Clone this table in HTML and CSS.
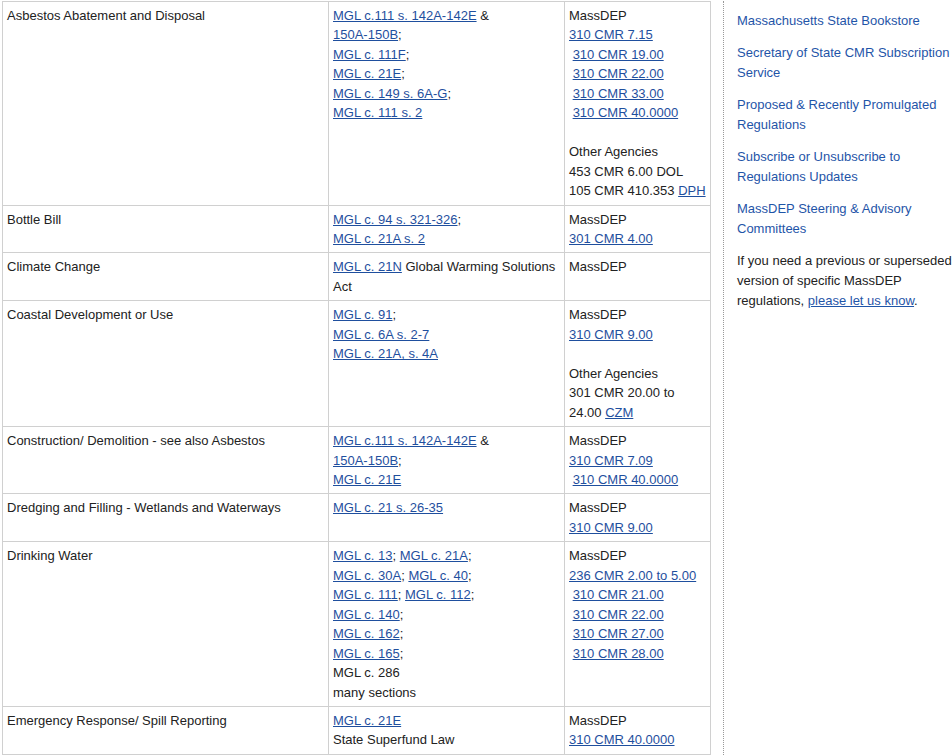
FILE: index.html
```html
<!DOCTYPE html>
<html lang="en">
<head>
<meta charset="utf-8">
<title>MassDEP Regulations by Topic</title>
<link rel="stylesheet" href="styles.css">
</head>
<body>
<div class="page">
  <div class="main">
    <table class="regs">
      <colgroup>
        <col class="c1"><col class="c2"><col class="c3">
      </colgroup>
      <tbody>
        <tr>
          <td>Asbestos Abatement and Disposal</td>
          <td><a href="#">MGL c.111 s. 142A-142E</a> &amp;<br><a href="#">150A-150B</a>;<br><a href="#">MGL c. 111F</a>;<br><a href="#">MGL c. 21E</a>;<br><a href="#">MGL c. 149 s. 6A-G</a>;<br><a href="#">MGL c. 111 s. 2</a></td>
          <td>MassDEP<br><a href="#">310 CMR 7.15</a><br>&nbsp;<a href="#">310 CMR 19.00</a><br>&nbsp;<a href="#">310 CMR 22.00</a><br>&nbsp;<a href="#">310 CMR 33.00</a><br>&nbsp;<a href="#">310 CMR 40.0000</a><br><br>Other Agencies<br>453 CMR 6.00 DOL<br>105 CMR 410.353 <a href="#">DPH</a></td>
        </tr>
        <tr>
          <td>Bottle Bill</td>
          <td><a href="#">MGL c. 94 s. 321-326</a>;<br><a href="#">MGL c. 21A s. 2</a></td>
          <td>MassDEP<br><a href="#">301 CMR 4.00</a></td>
        </tr>
        <tr>
          <td>Climate Change</td>
          <td><a href="#">MGL c. 21N</a> Global Warming Solutions<br>Act</td>
          <td>MassDEP</td>
        </tr>
        <tr>
          <td>Coastal Development or Use</td>
          <td><a href="#">MGL c. 91</a>;<br><a href="#">MGL c. 6A s. 2-7</a><br><a href="#">MGL c. 21A, s. 4A</a></td>
          <td>MassDEP<br><a href="#">310 CMR 9.00</a><br><br>Other Agencies<br>301 CMR 20.00 to<br>24.00 <a href="#">CZM</a></td>
        </tr>
        <tr>
          <td>Construction/ Demolition - see also Asbestos</td>
          <td><a href="#">MGL c.111 s. 142A-142E</a> &amp;<br><a href="#">150A-150B</a>;<br><a href="#">MGL c. 21E</a></td>
          <td>MassDEP<br><a href="#">310 CMR 7.09</a><br>&nbsp;<a href="#">310 CMR 40.0000</a></td>
        </tr>
        <tr>
          <td>Dredging and Filling - Wetlands and Waterways</td>
          <td><a href="#">MGL c. 21 s. 26-35</a></td>
          <td>MassDEP<br><a href="#">310 CMR 9.00</a></td>
        </tr>
        <tr>
          <td>Drinking Water</td>
          <td><a href="#">MGL c. 13</a>; <a href="#">MGL c. 21A</a>;<br><a href="#">MGL c. 30A</a>; <a href="#">MGL c. 40</a>;<br><a href="#">MGL c. 111</a>; <a href="#">MGL c. 112</a>;<br><a href="#">MGL c. 140</a>;<br><a href="#">MGL c. 162</a>;<br><a href="#">MGL c. 165</a>;<br>MGL c. 286<br>many sections</td>
          <td>MassDEP<br><a href="#">236 CMR 2.00 to 5.00</a><br>&nbsp;<a href="#">310 CMR 21.00</a><br>&nbsp;<a href="#">310 CMR 22.00</a><br>&nbsp;<a href="#">310 CMR 27.00</a><br>&nbsp;<a href="#">310 CMR 28.00</a></td>
        </tr>
        <tr>
          <td>Emergency Response/ Spill Reporting</td>
          <td><a href="#">MGL c. 21E</a><br>State Superfund Law</td>
          <td>MassDEP<br><a href="#">310 CMR 40.0000</a></td>
        </tr>
      </tbody>
    </table>
  </div>
  <aside class="side">
    <p><a class="nav" href="#">Massachusetts State Bookstore</a></p>
    <p><a class="nav" href="#">Secretary of State CMR Subscription Service</a></p>
    <p><a class="nav" href="#">Proposed &amp; Recently Promulgated Regulations</a></p>
    <p><a class="nav" href="#">Subscribe or Unsubscribe to Regulations Updates</a></p>
    <p><a class="nav" href="#">MassDEP Steering &amp; Advisory Committees</a></p>
    <p>If you need a previous or superseded version of specific MassDEP regulations, <a href="#">please let us know</a>.</p>
  </aside>
</div>
</body>
</html>
```
FILE: styles.css
```css
html, body {
  margin: 0;
  padding: 0;
  background: #fff;
  overflow: hidden;
}
body {
  font-family: "Liberation Sans", Arial, sans-serif;
  font-size: 13px;
  line-height: 19.45px;
  color: #222;
}
a {
  color: #1f4f9e;
  text-decoration: underline;
}
.page {
  display: flex;
  align-items: stretch;
  padding: 1px 0 0 2px;
  width: 952px;
  box-sizing: border-box;
  min-height: 755px;
}
.main {
  width: 708px;
  flex: none;
}
.regs {
  border-collapse: collapse;
  width: 708px;
  table-layout: fixed;
}
.regs col.c1 { width: 326px; }
.regs col.c2 { width: 236px; }
.regs col.c3 { width: 146px; }
.regs td {
  border: 1px solid #d0d0d0;
  padding: 4px;
  vertical-align: top;
  white-space: nowrap;
}
.side {
  flex: none;
  width: 215px;
  margin-left: 13px;
  border-left: 1px dotted #999;
  padding: 10px 0 0 13px;
  line-height: 20px;
}
.side p {
  margin: 0 0 12px 0;
}
.side a.nav {
  color: #1f55a8;
  text-decoration: none;
}
.side a {
  color: #1f55a8;
}
```
